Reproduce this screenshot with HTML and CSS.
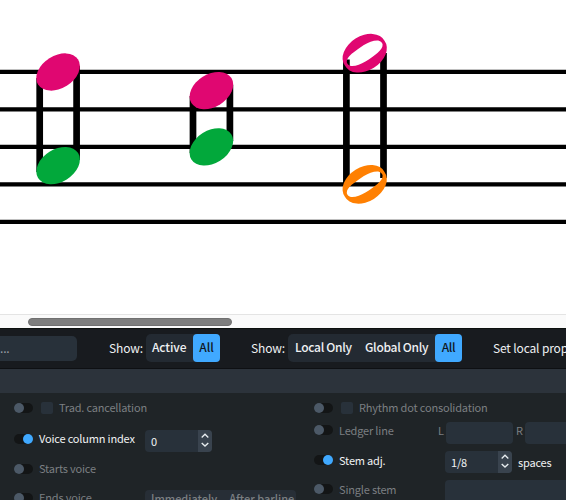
FILE: index.html
```
<!DOCTYPE html>
<html lang="en">
<head>
<meta charset="utf-8">
<title>Score properties</title>
<link rel="stylesheet" href="styles.css">
</head>
<body>
<main class="app">
  <section class="score">
    <svg width="566" height="314" viewBox="0 0 566 314">
      <defs>
        <ellipse id="head" rx="23.6" ry="16.3" transform="rotate(-32)"/>
        <g id="half">
          <path fill-rule="evenodd" d="M-19.8 12.4A23.4 16.3 -32 1 0 19.8 -12.4A23.4 16.3 -32 1 0 -19.8 12.4ZM-17.9 8.5C-17.9 6-16.5 3.5-13 .5C-6-5 4-12.8 12.5-12.8C15.5-12.8 17.9-10.5 17.9-8.5C17.9-6 16.5-3.5 13-.5C6 5-4 12.8-12.5 12.8C-15.5 12.8-17.9 10.5-17.9 8.5Z"/>
        </g>
      </defs>
      <path class="staff" d="M0 71.9H566M0 109.3H566M0 146.8H566M0 184.3H566M0 221.8H566"/>
      <path class="stems" d="M39.7 78V172M76.6 66V160M193 96V153M229.9 85V141M346.4 59.5V185M383.5 53V178"/>
      <use href="#head" class="pink" x="58.1" y="72"/>
      <use href="#head" class="green" x="58.1" y="165.6"/>
      <use href="#head" class="pink" x="211.4" y="90.6"/>
      <use href="#head" class="green" x="211.4" y="146.9"/>
      <use href="#half" class="pink" x="364.7" y="53.2"/>
      <use href="#half" class="orange" x="364.7" y="184.3"/>
    </svg>
  </section>
  <div class="scrollbar"><div class="thumb"></div></div>
  <nav class="toolbar">
    <div class="filter">...</div>
    <span class="show">Show:</span>
    <div class="group first"><span class="opt">Active</span><span class="opt on">All</span></div>
    <span class="show second">Show:</span>
    <div class="group"><span class="opt">Local Only</span><span class="opt global">Global Only</span><span class="opt on">All</span></div>
    <span class="set">Set local prop</span>
  </nav>
  <header class="heading"></header>
  <section class="panel">
    <div class="column">
      <div class="row r1"><i class="toggle"></i><i class="check"></i><span class="label">Trad. cancellation</span></div>
      <div class="row r2 active"><i class="toggle"></i><span class="label">Voice column index</span>
        <div class="spin"><span>0</span><b><svg width="14" height="22" viewBox="0 0 14 22"><path d="M3.7 7.4 7 4.3 10.3 7.4M3.7 13 7 16.1 10.3 13"/></svg></b></div></div>
      <div class="row r3"><i class="toggle"></i><span class="label">Starts voice</span></div>
      <div class="row r4"><i class="toggle"></i><span class="label">Ends voice</span>
        <div class="choices"><span>Immediately</span><span>After barline</span></div></div>
    </div>
    <div class="column">
      <div class="row r1"><i class="toggle"></i><i class="check"></i><span class="label">Rhythm dot consolidation</span></div>
      <div class="row s2"><i class="toggle"></i><span class="label">Ledger line</span><span class="side">L</span><div class="field"></div><span class="side right">R</span><div class="field wide"></div></div>
      <div class="row s3 active"><i class="toggle"></i><span class="label">Stem adj.</span>
        <div class="spin"><span>1/8</span><b><svg width="14" height="22" viewBox="0 0 14 22"><path d="M3.7 7.4 7 4.3 10.3 7.4M3.7 13 7 16.1 10.3 13"/></svg></b></div><span class="unit">spaces</span></div>
      <div class="row s4"><i class="toggle"></i><span class="label">Single stem</span><div class="field long"></div></div>
    </div>
  </section>
</main>
</body>
</html>
```
FILE: styles.css
```
* { box-sizing: border-box; }
body { margin: 0; background: #1f2427; font: 12px/18px "Noto Sans CJK SC", "Noto Sans", sans-serif; }
.app { width: 566px; height: 500px; overflow: hidden; display: flex; flex-direction: column; white-space: nowrap; }
.score { height: 314px; flex: none; background: #fff; }
.score svg { display: block; }
.staff { stroke: #000; stroke-width: 4.3; }
.stems { stroke: #000; stroke-width: 6.7; }
.pink { fill: #e00771; }
.green { fill: #02a83b; }
.orange { fill: #ff8002; }

.scrollbar { height: 14px; flex: none; background: #fafafa; border-top: 1px solid #e4e4e4; padding: 3px 0 0 28px; }
.thumb { width: 203.5px; height: 8px; border-radius: 4px; background: #7e7e7e; border: 1px solid #707070; }

.toolbar { height: 41px; flex: none; display: flex; align-items: center; background: #181b1f; border-top: 1px solid #0c100e; border-bottom: 1px solid #0e1013; color: #eef0f2; letter-spacing: -.15px; }
.filter { width: 77px; height: 25px; flex: none; border-radius: 0 5px 5px 0; background: #28313a; color: #9a9fa5; line-height: 24px; }
.show { width: 37px; flex: none; margin-left: 32px; margin-top: -2px; }
.show.second { margin-left: 31px; }
.group { display: flex; flex: none; height: 28px; margin-top: -1px; border-radius: 5px; background: #232a32; font-weight: 500; line-height: 26px; letter-spacing: -.3px; }
.group.first { width: 74px; letter-spacing: -.1px; }
.group .opt { padding-left: 7px; width: 70px; }
.group.first .opt { width: 47px; padding-left: 6px; }
.group .opt.global { width: 77px; padding-left: 7px; }
.group .opt.on, .group.first .opt.on { width: 27px; padding: 0; text-align: center; border-radius: 4px; background: #40a9ff; color: #10171e; }
.set { margin-left: 31px; margin-top: -2px; }

.heading { height: 24px; flex: none; background: #2c333b; }
.panel { display: flex; height: 107px; flex: none; overflow: hidden; background: #1f2427; color: #7b7f82; font-size: 11px; letter-spacing: -.18px; }
.column { width: 300px; flex: none; padding-left: 14px; }
.row { display: flex; align-items: center; }
.toggle { flex: none; width: 19px; height: 10px; border-radius: 5px; background: #131516; display: flex; align-items: center; }
.toggle::before { content: ""; width: 10px; height: 10px; border-radius: 50%; background: #4c5967; }
.active { color: #f0f2f3; }
.active .toggle { justify-content: flex-end; }
.active .toggle::before { background: #40a9ff; }
.check { width: 12px; height: 12px; flex: none; margin-left: 8px; border-radius: 2px; background: #28313a; }
.label { width: 106px; flex: none; margin-left: 6px; }
.check + .label { width: auto; }
.r1 { height: 30px; }
.r2 { height: 31px; }
.r3 { height: 30px; }
.r4 { height: 28px; }
.r1 .label, .r2 .label, .r3 .label, .r4 .label { margin-top: -2px; }
.spin { display: flex; flex: none; width: 67px; height: 22px; margin-top: 4px; border-radius: 4px; overflow: hidden; background: #28313a; }
.spin span { width: 53px; padding-left: 6px; line-height: 23px; }
.spin b { width: 14px; background: #39434e; }
.spin svg { display: block; fill: none; stroke: #e5eaed; stroke-width: 1.4; }
.choices { display: flex; flex: none; width: 151px; height: 26px; margin-top: 10px; border-radius: 4px; background: #272e36; font-weight: 500; line-height: 17px; padding-left: 6px; gap: 12px; letter-spacing: 0; }
.side { width: 8px; margin-left: -7px; flex: none; margin-top: -1px; }
.side.right { margin-left: 3px; width: 9px; }
.field { width: 67px; height: 22px; flex: none; margin-top: 5px; border-radius: 4px; background: #28313a; }
.field.wide { width: 90px; }
.s2 { height: 22px; margin-top: -4px; }
.s3 { height: 30px; margin-top: 4px; }
.unit { margin-left: 6px; margin-top: 4px; }
.s4 { height: 29px; margin-top: -1px; }
.field.long { width: 130px; height: 30px; margin-top: 13px; }
```
